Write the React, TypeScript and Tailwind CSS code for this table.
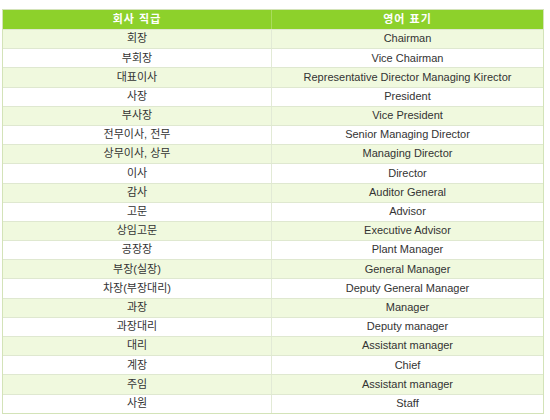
const rows: [string, string][] = [
  ["회장", "Chairman"],
  ["부회장", "Vice Chairman"],
  ["대표이사", "Representative Director Managing Kirector"],
  ["사장", "President"],
  ["부사장", "Vice President"],
  ["전무이사, 전무", "Senior Managing Director"],
  ["상무이사, 상무", "Managing Director"],
  ["이사", "Director"],
  ["감사", "Auditor General"],
  ["고문", "Advisor"],
  ["상임고문", "Executive Advisor"],
  ["공장장", "Plant Manager"],
  ["부장(실장)", "General Manager"],
  ["차장(부장대리)", "Deputy General Manager"],
  ["과장", "Manager"],
  ["과장대리", "Deputy manager"],
  ["대리", "Assistant manager"],
  ["계장", "Chief"],
  ["주임", "Assistant manager"],
  ["사원", "Staff"],
];

export default function App() {
  return (
    <div
      className="w-[550px] h-[420px] bg-white pt-[9px] pl-[2px]"
      style={{ fontFamily: '"Liberation Sans", Arial, "Noto Sans CJK KR", sans-serif' }}
    >
      <div className="w-[542px] border border-[#d3e3b8] text-[11px] text-[#333]">
        {/* Header */}
        <div className="flex h-[19px] bg-[#8dd12b] text-white font-bold tracking-[1px]">
          <div className="w-[269px] flex items-center justify-center border-r border-[#a9dc5c] pb-[1px]">회사 직급</div>
          <div className="flex-1 flex items-center justify-center pb-[1px]">영어 표기</div>
        </div>

        {/* Rows */}
        {rows.map(([ko, en], i) => (
          <div
            key={i}
            className={`flex h-[19.2px] border-t border-[#dfe8d0] ${i % 2 === 0 ? "bg-[#f0f9de]" : "bg-white"}`}
          >
            <div className="w-[269px] flex items-center justify-center border-r border-[#e2ead6] pb-[1px]">{ko}</div>
            <div className="flex-1 flex items-center justify-center pb-[1px]">{en}</div>
          </div>
        ))}
      </div>
    </div>
  );
}
